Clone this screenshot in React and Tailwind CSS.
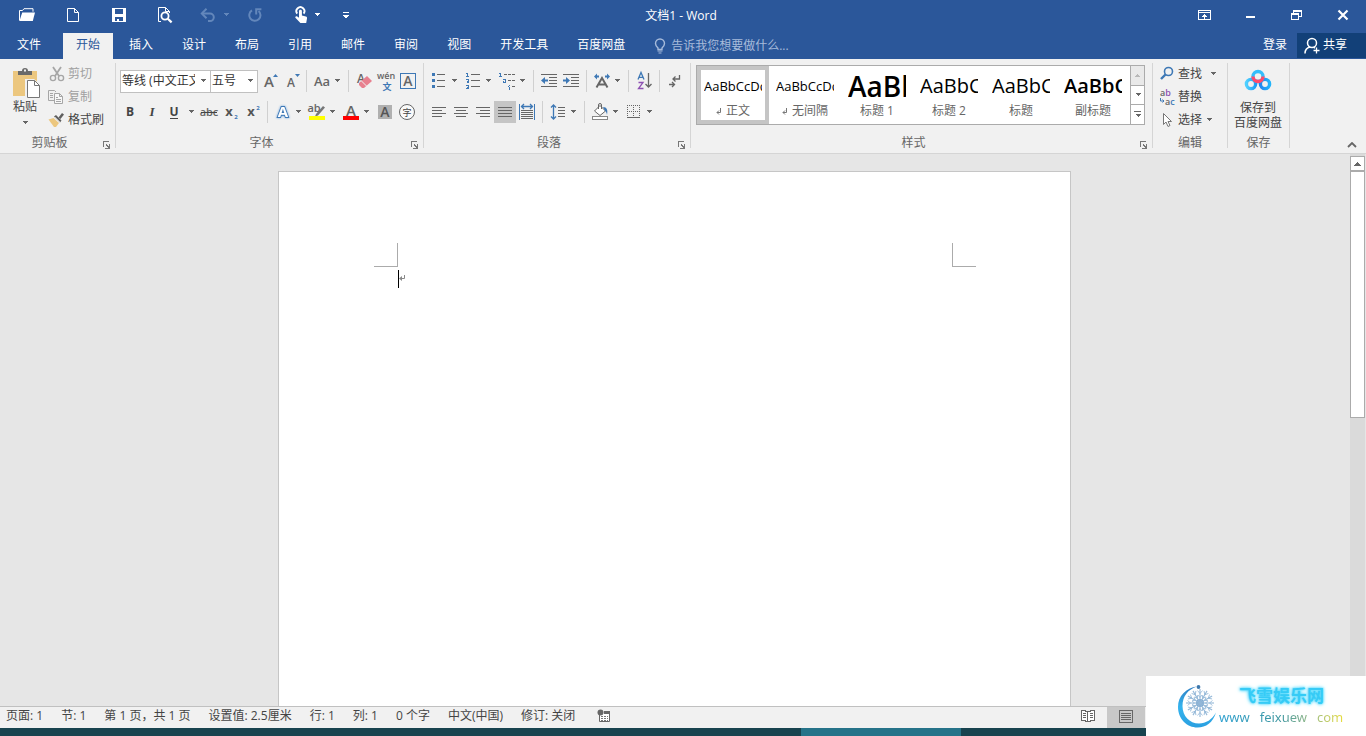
import React from "react";

const BLUE = "#3e78b5";
const GRAY = "#666666";

function Ic({ w = 22, h = 22, crisp = false, children }) {
  return (
    <svg
      width={w}
      height={h}
      viewBox={`0 0 ${w} ${h}`}
      fill="none"
      shapeRendering={crisp ? "crispEdges" : "auto"}
      className="block shrink-0"
      aria-hidden="true"
    >
      {children}
    </svg>
  );
}

function Caret({ className = "text-[#666666]" }) {
  return (
    <svg width="8" height="4" viewBox="0 0 8 4" shapeRendering="crispEdges" className={`block shrink-0 ${className}`} aria-hidden="true">
      <path d="M2 0h5v1H2zM3 1h3v1H3zM4 2h1v1H4z" fill="currentColor" />
    </svg>
  );
}

function Tool({ label, active = false, children }) {
  return (
    <button
      type="button"
      aria-label={label}
      title={label}
      className={`flex h-[22px] w-[22px] shrink-0 items-center justify-center ${active ? "bg-[#c5c5c5]" : "hover:bg-[#dcdcdc]"}`}
    >
      {children}
    </button>
  );
}

function Drop({ label, className = "" }) {
  return (
    <button type="button" aria-label={label} className={`flex h-[22px] w-2 shrink-0 items-center justify-center hover:bg-[#dcdcdc] ${className}`}>
      <Caret />
    </button>
  );
}

function Sep({ wide = false }) {
  return <div className={`h-[22px] w-px shrink-0 bg-[#d0d0d0] ${wide ? "ml-[7px] mr-1" : "mx-1"}`} />;
}

function Launcher({ label }) {
  return (
    <button type="button" aria-label={label} className="absolute -bottom-px right-1 flex h-2 w-2 items-center justify-center">
      <Ic w={8} h={8} crisp>
        <path d="M0.5 6V0.5H6" stroke="#777" />
        <path d="M3 3h1v1h1v1h1V3h1v5H2V7h3V6H4V5H3z" fill="#777" />
      </Ic>
    </button>
  );
}

function Group({ title, launcher, className = "", children }) {
  return (
    <section aria-label={title} className={`flex shrink-0 flex-col border-r border-[#d5d5d5] ${className}`}>
      <div className="flex-1">{children}</div>
      <div className={`relative flex h-2.5 items-center justify-center text-[#666666] ${launcher ? "pr-4" : ""}`}>
        <span className="leading-4">{title}</span>
        {launcher && <Launcher label={launcher} />}
      </div>
    </section>
  );
}

/* ---------- title bar ---------- */

function TitleButton({ label, className, children }) {
  return (
    <button type="button" aria-label={label} className={`flex h-[30px] shrink-0 items-center justify-center hover:bg-[#3e6db5] ${className}`}>
      {children}
    </button>
  );
}

function TitleBar() {
  return (
    <div className="grid h-[33px] grid-cols-[1fr_auto_1fr] items-start">
      <div className="flex pl-1">
        <TitleButton label="打开" className="w-[46px]">
          <Ic w={18} h={16}>
            <path d="M1.5 13.5v-10h3l1.5-1.800h9v3" stroke="#fff" />
            <path d="M4.200 5.500H17l-2.200 8.500H1.500z" fill="#fff" />
          </Ic>
        </TitleButton>
        <TitleButton label="新建" className="w-[46px]">
          <Ic w={14} h={16}>
            <path d="M1.500 1.500h7l4 4v9h-11zM8.500 1.500v4h4" stroke="#fff" />
          </Ic>
        </TitleButton>
        <TitleButton label="保存" className="w-[46px]">
          <Ic w={14} h={14} crisp>
            <path fillRule="evenodd" d="M0 0h14v14H0zM3 1v5h8V1zM3 9v4h2v-2h2v2h4V9z" fill="#fff" />
          </Ic>
        </TitleButton>
        <TitleButton label="打印预览" className="w-[46px]">
          <Ic w={16} h={18}>
            <path d="M4 15.500H1.500v-14h7l4 4V7M8.500 1.500v4h4" stroke="#fff" />
            <circle cx="8" cy="10" r="3.600" stroke="#fff" strokeWidth="1.800" />
            <path d="M10.800 12.800l3.800 3.600" stroke="#fff" strokeWidth="2.200" />
          </Ic>
        </TitleButton>
        <TitleButton label="撤消" className="ml-1 w-[46px] gap-1.5">
          <Ic w={16} h={16}>
            <path d="M2 6.500h8a3.800 3.800 0 0 1 0 7.600H8" stroke="#6387bb" strokeWidth="2" />
            <path d="M6.500 1.800L1.800 6.500l4.700 4.700" stroke="#6387bb" strokeWidth="2" />
          </Ic>
          <Caret className="text-[#6387bb]" />
        </TitleButton>
        <TitleButton label="重复" className="w-[34px]">
          <Ic w={16} h={16}>
            <path d="M5 3.400A5.600 5.600 0 1 0 11.600 4" stroke="#6387bb" strokeWidth="2" />
            <path d="M9.200 7.400V2.200h5.200" stroke="#6387bb" strokeWidth="2" />
          </Ic>
        </TitleButton>
        <TitleButton label="触摸/鼠标模式" className="ml-3 w-[46px] gap-1">
          <Ic w={16} h={18}>
            <path d="M4.200 7.600a4 4 0 1 1 6.400 0" stroke="#fff" strokeWidth="1.900" />
            <path d="M6 5.200c0-1.800 2.900-1.800 2.900 0v4.200l4 1c1 .3 1.300 1 1.100 2l-.8 4.600H7.400L2.400 11.800c-.6-1.200.8-2.200 1.900-1.300l1.700 1.300z" fill="#fff" />
          </Ic>
          <Caret className="text-white" />
        </TitleButton>
        <TitleButton label="自定义快速访问工具栏" className="w-8">
          <Ic w={8} h={8} crisp>
            <path d="M1 1h6v1H1zM1 4h6v1H1zM2 5h4v1H2zM3 6h2v1H3z" fill="#fff" />
          </Ic>
        </TitleButton>
      </div>
      <h1 className="flex h-8 items-center pr-1 text-[12px] font-normal">文档1 - Word</h1>
      <div className="flex justify-end">
        <TitleButton label="功能区显示选项" className="w-[46px]">
          <Ic w={14} h={12} crisp>
            <path d="M0.500 1.500h12v9H0.500zM0 3.500h13" stroke="#fff" />
            <path d="M6 5h1v1h1v1h1v1H7v2H6V8H4V7h1V6h1z" fill="#fff" />
          </Ic>
        </TitleButton>
        <TitleButton label="最小化" className="w-[46px]">
          <Ic w={10} h={10} crisp>
            <path d="M0 6h9v2H0z" fill="#fff" />
          </Ic>
        </TitleButton>
        <TitleButton label="向下还原" className="w-[46px]">
          <Ic w={12} h={12} crisp>
            <path fillRule="evenodd" d="M2 1h9v7H8v3H0V4h2zM3 3v1h5v3h2V3zM1 6v4h6V6z" fill="#fff" />
          </Ic>
        </TitleButton>
        <TitleButton label="关闭" className="w-[46px]">
          <Ic w={12} h={12}>
            <path d="M1.500 1.500l9 9M10.500 1.500l-9 9" stroke="#fff" strokeWidth="2.200" />
          </Ic>
        </TitleButton>
      </div>
    </div>
  );
}

const TABS = ["开始", "插入", "设计", "布局", "引用", "邮件", "审阅", "视图", "开发工具", "百度网盘"];

function TabBar() {
  return (
    <div className="flex h-[26px] items-stretch">
      <nav className="flex gap-[3px] pl-1" aria-label="功能区选项卡">
        <button type="button" className="mr-1.5 px-[13px] pb-0.5">文件</button>
        {TABS.map((tab, i) => (
          <button
            key={tab}
            type="button"
            className={`whitespace-nowrap px-[13px] pb-0.5 ${i === 0 ? "bg-[#f1f1f1] text-[#2b579a]" : "hover:bg-[#3e6db5]"}`}
          >
            {tab}
          </button>
        ))}
      </nav>
      <label className="ml-4 flex min-w-0 flex-1 items-center gap-[5px]">
        <Ic w={12} h={16}>
          <path d="M4 11.500V10C2.500 8.600 1.500 7.600 1.500 5.500a4.500 4.500 0 0 1 9 0C10.500 7.600 9.500 8.600 8 10v1.500z" stroke="#a7bbdb" strokeWidth="1.400" />
          <path d="M3.500 12.500h5v1h-5zM4.500 14.500h3v1h-3z" fill="#a7bbdb" />
        </Ic>
        <span className="sr-only">操作说明搜索</span>
        <input type="text" placeholder="告诉我您想要做什么..." className="w-full min-w-0 bg-transparent outline-none placeholder:text-[#a7bbdb]" />
      </label>
      <div className="flex items-stretch gap-2.5">
        <button type="button" className="pb-0.5">登录</button>
        <button type="button" className="mb-px flex w-[69px] items-center gap-0.5 bg-[#124078] pl-1.5">
          <Ic w={18} h={18}>
            <circle cx="9" cy="6" r="4.500" stroke="#fff" strokeWidth="1.500" />
            <path d="M2 16.500c0-3.500 2-6 5-6.600M10.500 10.200l1.500 1" stroke="#fff" strokeWidth="1.500" />
            <path d="M13.500 10.500v6M10.500 13.500h6" stroke="#fff" strokeWidth="1.300" />
          </Ic>
          <span className="pb-0.5">共享</span>
        </button>
      </div>
    </div>
  );
}

/* ---------- ribbon groups ---------- */

function ClipboardGroup() {
  return (
    <Group title="剪贴板" launcher="剪贴板设置" className="w-[116px]">
      <div className="flex pl-[7px]">
        <button type="button" className="flex w-9 flex-col items-center pt-1 text-[#444444]">
          <Ic w={32} h={32}>
            <path d="M4 4h24v25H4z" fill="#ecc77f" />
            <path d="M9 8V4h4a3 3 0 0 1 6 0h4v4z" fill="#6a6a6a" />
            <rect x="15" y="2.500" width="2" height="2" fill="#f1f1f1" />
            <path d="M16 12h9l7 6v13H16z" fill="#f1f1f1" />
            <path d="M18.500 13.500h7l5 5v12h-12z" fill="#fff" stroke="#777" />
            <path d="M25.500 13.500v5h5" stroke="#777" />
          </Ic>
          <span className="leading-4">粘贴</span>
          <span className="mt-1.5"><Caret /></span>
        </button>
        <div className="flex flex-col">
          <button type="button" disabled className="flex h-[23px] items-center gap-0.5 pb-0.5 pl-[5px] text-[#a0a0a0]">
            <Ic w={18} h={16}>
              <path d="M5 1l6 9M13 1l-6 9" stroke="#a6a6a6" strokeWidth="1.800" />
              <circle cx="5" cy="12" r="2.600" stroke="#a6a6a6" strokeWidth="1.400" />
              <circle cx="13" cy="12" r="2.600" stroke="#a6a6a6" strokeWidth="1.400" />
            </Ic>
            剪切
          </button>
          <button type="button" disabled className="flex h-[23px] items-center gap-0.5 pb-0.5 pl-[5px] text-[#a0a0a0]">
            <Ic w={18} h={16}>
              <path d="M6 11.500H0.500v-10h6L8 3" stroke="#a6a6a6" />
              <path d="M2 4.500h3M2 6.500h3M2 8.500h3" stroke="#a6a6a6" />
              <path d="M6.500 4.500h5l3 3v7h-8zM11.500 4.500v3h3" fill="#f8f8f8" stroke="#a6a6a6" />
              <path d="M8 8.500h2M8 10.500h5M8 12.500h5" stroke="#a6a6a6" />
            </Ic>
            复制
          </button>
          <button type="button" className="flex h-[23px] items-center gap-0.5 pb-0.5 pl-[5px] text-[#444444]">
            <Ic w={18} h={16}>
              <path d="M0.500 7.500l5-1.500 5.500 5-3 4H6z" fill="#ecc77f" />
              <path d="M6 4.500l2-1.500 5.500 5.500-1.500 2z" fill="#5f5f5f" />
              <path d="M10.500 5.500L14 1l2 1.500-3.500 4.500z" fill="#5f5f5f" />
              <path d="M7 5l5 5" stroke="#f1f1f1" strokeWidth="0.600" />
            </Ic>
            格式刷
          </button>
        </div>
      </div>
    </Group>
  );
}

function Combo({ label, value, className }) {
  return (
    <label className={`relative block h-[23px] shrink-0 border border-[#c0c0c0] bg-white ${className}`}>
      <span className="sr-only">{label}</span>
      <select defaultValue={value} className="block h-full w-full appearance-none overflow-hidden bg-transparent pl-px pr-[15px] text-[12px] text-[#333333] outline-none">
        <option>{value}</option>
      </select>
      <span className="pointer-events-none absolute inset-y-0 right-[3px] flex items-center">
        <Caret />
      </span>
    </label>
  );
}

function Letter({ x, y, size, color = GRAY, weight = 600, anchor = "middle", extra, children }) {
  return (
    <text x={x} y={y} fontSize={size} fill={color} fontWeight={weight} textAnchor={anchor} fontFamily="'Open Sans', 'Noto Sans CJK SC', sans-serif" {...extra}>
      {children}
    </text>
  );
}

function FontGroup() {
  return (
    <Group title="字体" launcher="字体设置" className="w-[308px]">
      <div className="flex flex-col gap-[9px] pl-[3px] pt-[7px]">
        <div className="flex h-[22px] items-center">
          <Combo label="字体" value="等线 (中文正文)" className="ml-px w-[91px]" />
          <Combo label="字号" value="五号" className="-ml-px w-[48px]" />
          <Tool label="增大字号">
            <Ic><Letter x={11} y={17} size={15}>A</Letter><path d="M15 7h5l-2.500-3z" fill={BLUE} /></Ic>
          </Tool>
          <Tool label="减小字号">
            <Ic><Letter x={11} y={17} size={12}>A</Letter><path d="M15 4h5l-2.500 3z" fill={BLUE} /></Ic>
          </Tool>
          <Sep />
          <Tool label="更改大小写">
            <Ic><Letter x={11} y={16} size={13}>Aa</Letter></Ic>
          </Tool>
          <Drop label="更改大小写选项" />
          <Sep wide />
          <Tool label="清除所有格式">
            <Ic>
              <Letter x={8} y={13} size={12}>A</Letter>
              <path d="M6 13l8-7 5 5-8 7H9l-3-3z" fill="#e8808f" />
              <path d="M8.500 11l5 5" stroke="#f1f1f1" />
            </Ic>
          </Tool>
          <Tool label="拼音指南">
            <Ic>
              <Letter x={11} y={9} size={9}>wén</Letter>
              <Letter x={12} y={20} size={9} color={BLUE} weight={700}>文</Letter>
            </Ic>
          </Tool>
          <Tool label="字符边框">
            <Ic>
              <rect x="3.500" y="3.500" width="15" height="15" stroke={BLUE} />
              <Letter x={11} y={16} size={14}>A</Letter>
            </Ic>
          </Tool>
        </div>
        <div className="flex h-[22px] items-center">
          <Tool label="加粗">
            <Ic><Letter x={11} y={15} size={12} color="#444" weight={700}>B</Letter></Ic>
          </Tool>
          <Tool label="倾斜">
            <Ic><text x="11" y="15" fontSize="13" fill="#444" textAnchor="middle" fontStyle="italic" fontWeight="700" fontFamily="'Liberation Serif', serif">I</text></Ic>
          </Tool>
          <Tool label="下划线">
            <Ic><Letter x={11} y={15} size={12} color="#444" weight={700}>U</Letter><path d="M7 17.500h8" stroke="#444" /></Ic>
          </Tool>
          <Drop label="下划线选项" className="mx-0.5" />
          <Tool label="删除线">
            <Ic><Letter x={12} y={15} size={11}>abc</Letter><path d="M4 11.500h16" stroke="#444" /></Ic>
          </Tool>
          <Tool label="下标">
            <Ic><Letter x={10} y={15} size={13} color="#555" weight={700}>x</Letter><Letter x={17} y={18} size={6} color={BLUE} weight={700}>2</Letter></Ic>
          </Tool>
          <Tool label="上标">
            <Ic><Letter x={10} y={15} size={13} color="#555" weight={700}>x</Letter><Letter x={17} y={9} size={6} color={BLUE} weight={700}>2</Letter></Ic>
          </Tool>
          <Sep />
          <Tool label="文本效果和版式">
            <Ic>
              <Letter x={11} y={16} size={15} color="#fff" weight={700} extra={{ stroke: BLUE, strokeWidth: 1.8, paintOrder: "stroke", style: { filter: "drop-shadow(0 0 1px #6ba3dd)" } }}>A</Letter>
            </Ic>
          </Tool>
          <Drop label="文本效果选项" />
          <div className="w-1" />
          <Tool label="突出显示">
            <Ic>
              <Letter x={8} y={11} size={11}>ab</Letter>
              <path d="M10 13L17 5l2 1.500-7 8-3 1z" fill="#777" />
              <path d="M3 15h16v4H3z" fill="#ffff00" />
            </Ic>
          </Tool>
          <Drop label="突出显示颜色" />
          <div className="w-1" />
          <Tool label="字体颜色">
            <Ic><Letter x={11} y={15} size={15}>A</Letter><path d="M3 15h16v4H3z" fill="#ff0000" /></Ic>
          </Tool>
          <Drop label="更多字体颜色" />
          <div className="w-1" />
          <Tool label="字符底纹">
            <Ic><path d="M4 4h14v14H4z" fill="#b0b0b0" /><Letter x={11} y={16} size={14} color="#555">A</Letter></Ic>
          </Tool>
          <Tool label="带圈字符">
            <Ic><circle cx="11" cy="11" r="7.500" fill="#fafafa" stroke="#666" /><Letter x={11} y={14.500} size={9} weight={400} color="#444">字</Letter></Ic>
          </Tool>
        </div>
      </div>
    </Group>
  );
}

const ALIGNMENTS = [
  ["左对齐", "M4 6.500h14M4 9.500h10M4 12.500h14M4 15.500h10"],
  ["居中", "M4 6.500h14M6 9.500h10M4 12.500h14M6 15.500h10"],
  ["右对齐", "M4 6.500h14M8 9.500h10M4 12.500h14M8 15.500h10"],
  ["两端对齐", "M4 6.500h14M4 9.500h14M4 12.500h14M4 15.500h14"],
];

function ParagraphGroup() {
  return (
    <Group title="段落" launcher="段落设置" className="w-[267px]">
      <div className="flex flex-col gap-[9px] pl-1 pt-[7px]">
        <div className="flex h-[22px] items-center">
          <Tool label="项目符号">
            <Ic crisp>
              <path d="M4 3h3v3H4zM4 9h3v3H4zM4 15h3v3H4z" fill={BLUE} />
              <path d="M9 4.500h8M9 10.500h8M9 16.500h8" stroke={GRAY} />
            </Ic>
          </Tool>
          <Drop label="项目符号库" />
          <div className="w-1" />
          <Tool label="编号">
            <Ic crisp>
              <path d="M4 3.500h1.500V7M4 6.500h3M4 9.500h2.500v1.500H5v1.500h2M4 15.500h2.500v3H4M5 17.500h1" stroke={BLUE} />
              <path d="M9 4.500h9M9 10.500h9M9 16.500h9" stroke={GRAY} />
            </Ic>
          </Tool>
          <Drop label="编号库" />
          <div className="w-1" />
          <Tool label="多级列表">
            <Ic crisp>
              <path d="M3 3.500h1.500V7M3 6.500h3M7 9.500h2.500V13M9 12.500H7.500v-1.500M13 15h1M13.500 16.500V20M12 16.500h1" stroke={BLUE} />
              <path d="M8 4.500h11M12 10.500h7M16 16.500h3" stroke={GRAY} strokeDasharray="3 1" />
            </Ic>
          </Tool>
          <Drop label="多级列表库" />
          <Sep wide />
          <Tool label="减少缩进量">
            <Ic>
              <path d="M3 4.500h16M11 7.500h8M11 10.500h8M11 13.500h8M3 16.500h16" stroke={GRAY} />
              <path d="M3 10.500L7 7v2.500h3v2H7V14z" fill={BLUE} />
            </Ic>
          </Tool>
          <Tool label="增加缩进量">
            <Ic>
              <path d="M3 4.500h16M11 7.500h8M11 10.500h8M11 13.500h8M3 16.500h16" stroke={GRAY} />
              <path d="M10 10.500L6 7v2.500H3v2h3V14z" fill={BLUE} />
            </Ic>
          </Tool>
          <Sep />
          <Tool label="中文版式">
            <Ic>
              <path d="M5.500 17.500L11 8l5.500 9.500M7.500 14.500h7" stroke={GRAY} strokeWidth="2" />
              <path d="M3 6.500l3-3v2h2v2H6v2zM19 6.500l-3-3v2h-2v2h2v2z" fill={BLUE} />
            </Ic>
          </Tool>
          <Drop label="中文版式选项" />
          <Sep wide />
          <Tool label="排序">
            <Ic>
              <path d="M5 9.500L8 2.500l3 7M6 7.300h4" stroke={BLUE} strokeWidth="1.300" />
              <path d="M5.500 12.500H10L5.500 18.500h5" stroke="#8e52b3" strokeWidth="1.300" />
              <path d="M15.500 3v14M12.500 14l3 3 3-3" stroke={GRAY} strokeWidth="1.300" />
            </Ic>
          </Tool>
          <Sep />
          <Tool label="显示/隐藏编辑标记">
            <Ic>
              <path d="M15.500 5v4H9M11.500 6.500L9 9l2.500 2.500" stroke={GRAY} strokeWidth="1.300" />
              <path d="M5 14.500h5M8 12l2.500 2.500L8 17" stroke={GRAY} strokeWidth="1.300" />
            </Ic>
          </Tool>
        </div>
        <div className="flex h-[22px] items-center">
          {ALIGNMENTS.map(([label, d], i) => (
            <Tool key={label} label={label} active={i === 3}>
              <Ic crisp><path d={d} stroke={GRAY} /></Ic>
            </Tool>
          ))}
          <Tool label="分散对齐">
            <Ic>
              <path d="M3.500 3v16M18.500 3v16" stroke={BLUE} />
              <path d="M5 5.500h12M8 3L5.500 5.500 8 8M14 3l2.500 2.500L14 8" stroke={BLUE} strokeWidth="1.300" />
              <path d="M5 9.500h12M5 11.500h12M5 13.500h12M5 15.500h12M5 17.500h12" stroke={GRAY} />
            </Ic>
          </Tool>
          <Sep />
          <Tool label="行和段落间距">
            <Ic>
              <path d="M6.500 4v14M4 6.500L6.500 4 9 6.500M4 15.500L6.500 18 9 15.500" stroke={BLUE} strokeWidth="1.300" />
              <path d="M11 6.500h7M11 9.500h7M11 12.500h7M11 15.500h7" stroke={GRAY} />
            </Ic>
          </Tool>
          <Drop label="行距选项" />
          <Sep wide />
          <Tool label="底纹">
            <Ic>
              <path d="M5.500 10L11 4.500l5.500 5.500-5.500 4.500z" fill="#fff" stroke={GRAY} />
              <path d="M9.500 8V4a1.500 1.500 0 0 1 3 0v4" stroke={GRAY} />
              <path d="M14 6c4 0 5 3 4 8-.500-3-1.500-4-2-4z" fill={BLUE} />
              <rect x="3.500" y="15.500" width="15" height="3" fill="#fff" stroke="#888" />
            </Ic>
          </Tool>
          <Drop label="底纹颜色" />
          <div className="w-1" />
          <Tool label="边框">
            <Ic crisp>
              <path d="M4 4.500h13M4 10.500h13" stroke={GRAY} strokeDasharray="1 1" />
              <path d="M4.500 4v12M10.500 4v12M16.500 4v12" stroke={GRAY} strokeDasharray="1 1" />
              <path d="M4 16.500h13" stroke={GRAY} />
            </Ic>
          </Tool>
          <Drop label="边框选项" />
        </div>
      </div>
    </Group>
  );
}

const STYLES = [
  { name: "正文", sample: "AaBbCcDd", mark: true, look: "text-[13px] font-normal" },
  { name: "无间隔", sample: "AaBbCcDd", mark: true, look: "text-[13px] font-normal" },
  { name: "标题 1", sample: "AaBb", look: "text-[28px] font-semibold" },
  { name: "标题 2", sample: "AaBbC", look: "text-[20px] font-normal" },
  { name: "标题", sample: "AaBbC", look: "text-[20px] font-normal" },
  { name: "副标题", sample: "AaBbC", look: "text-[20px] font-semibold" },
];

function StylesGroup() {
  return (
    <Group title="样式" launcher="样式设置" className="w-[462px]">
      <div className="flex pl-[5px] pr-[7px] pt-0.5">
        <div className="flex h-[60px] flex-1 border border-[#ababab] bg-white">
          {STYLES.map((s, i) => (
            <button
              key={s.name}
              type="button"
              className={`flex w-[72px] shrink-0 flex-col items-center border-4 ${i === 0 ? "border-[#c5c5c5]" : "border-transparent"}`}
            >
              <span className={`flex h-8 w-[58px] items-center overflow-hidden whitespace-nowrap leading-none text-black ${s.look}`}>{s.sample}</span>
              <span className="flex items-center gap-1 leading-[18px] text-[#666666]">
                {s.mark && (
                  <Ic w={6} h={8}>
                    <path d="M4.500 1v4.500H1M3 3.500l-2 2 2 2" stroke="#777" />
                  </Ic>
                )}
                {s.name}
              </span>
            </button>
          ))}
          <div className="ml-auto flex w-3.5 flex-col divide-y divide-[#ababab] border-l border-[#ababab]">
            <button type="button" aria-label="上一行" className="flex flex-1 items-center justify-center bg-[#e9e9e9]">
              <span className="rotate-180"><Caret className="text-[#b8b8b8]" /></span>
            </button>
            <button type="button" aria-label="下一行" className="flex flex-1 items-center justify-center"><Caret /></button>
            <button type="button" aria-label="其他" className="flex flex-1 flex-col items-center justify-center gap-0.5">
              <span className="h-px w-[7px] bg-[#666666]" />
              <Caret />
            </button>
          </div>
        </div>
      </div>
    </Group>
  );
}

function EditGroup() {
  return (
    <Group title="编辑" className="w-[75px]">
      <div className="flex flex-col items-start pl-1.5 text-[#444444]">
        <button type="button" className="flex h-[23px] items-center gap-[3px] pb-0.5">
          <Ic w={16} h={16}>
            <circle cx="9.500" cy="5.500" r="4" stroke={BLUE} strokeWidth="1.600" />
            <path d="M6.500 8.500L2 13" stroke={BLUE} strokeWidth="2.400" />
          </Ic>
          <span>查找</span>
          <span className="ml-1"><Caret /></span>
        </button>
        <button type="button" className="flex h-[23px] items-center gap-[3px] pb-0.5">
          <Ic w={16} h={18}>
            <text x="1" y="8" fontSize="9" fontWeight="600" fontFamily="'Open Sans', sans-serif" fill={GRAY}>
              a<tspan fill="#8e52b3">b</tspan>
            </text>
            <text x="6" y="17" fontSize="9" fontWeight="600" fontFamily="'Open Sans', sans-serif" fill={GRAY}>
              a<tspan fill={BLUE}>c</tspan>
            </text>
            <path d="M1.500 10v3H5M3.500 11.500L5 13l-1.500 1.500" stroke={BLUE} />
          </Ic>
          <span>替换</span>
        </button>
        <button type="button" className="flex h-[23px] items-center gap-[3px] pb-0.5">
          <Ic w={16} h={16}>
            <path d="M4.500 1.500v11l2.500-2.500 2 4.500 2-1-2-4h3.500z" fill="#fff" stroke="#777" />
          </Ic>
          <span>选择</span>
          <Caret />
        </button>
      </div>
    </Group>
  );
}

function SaveGroup() {
  return (
    <Group title="保存" className="w-[62px]">
      <button type="button" className="flex w-full flex-col items-center pr-px pt-[5px] text-[#444444]">
        <Ic w={28} h={24}>
          <defs>
            <linearGradient id="ringLeft" x1="0" x2="1"><stop offset="0" stopColor="#4fd0ff" /><stop offset="1" stopColor="#1f9cf5" /></linearGradient>
            <linearGradient id="ringRight" x1="0" x2="1"><stop offset="0" stopColor="#1f86f0" /><stop offset="1" stopColor="#22b4fa" /></linearGradient>
          </defs>
          <circle cx="7" cy="16" r="4.600" stroke="url(#ringLeft)" strokeWidth="3.400" />
          <circle cx="21" cy="16" r="4.600" stroke="url(#ringRight)" strokeWidth="3.400" />
          <circle cx="14" cy="8.500" r="5" stroke="#35bdfb" strokeWidth="3.400" />
          <path d="M9 8.500a5 5 0 0 0 10 0" stroke="#ff4a6c" strokeWidth="3.400" />
        </Ic>
        <span className="mt-2 flex flex-col items-center whitespace-nowrap leading-[15px]">
          <span>保存到</span>
          <span>百度网盘</span>
        </span>
      </button>
    </Group>
  );
}

function Ribbon() {
  return (
    <div className="flex h-[95px] shrink-0 border-b border-[#d5d5d5] bg-[#f1f1f1] pb-[5px] pt-1">
      <ClipboardGroup />
      <FontGroup />
      <ParagraphGroup />
      <StylesGroup />
      <EditGroup />
      <SaveGroup />
      <div className="flex flex-1 items-end justify-end pr-[9px]">
        <button type="button" aria-label="折叠功能区">
          <Ic w={10} h={6}><path d="M1 5l4-4 4 4" stroke="#666" strokeWidth="1.800" /></Ic>
        </button>
      </div>
    </div>
  );
}

/* ---------- document ---------- */

function DocumentArea() {
  return (
    <main className="flex min-h-0 flex-1 bg-[#e6e6e6]">
      <div className="flex min-w-0 flex-1 justify-center overflow-hidden pr-0.5 pt-[17px]">
        <article className="h-[1122px] w-[793px] shrink-0 border border-[#c6c6c6] bg-white pt-[71px]">
          <div className="flex justify-between pl-[95px] pr-[94px]">
            <div className="h-6 w-6 border-b border-r border-[#ababab]" />
            <div className="h-6 w-6 border-b border-l border-[#ababab]" />
          </div>
          <div className="flex px-[119px] pt-[3px]">
            <span className="h-[18px] w-px bg-black" />
            <span className="pt-1">
              <Ic w={8} h={10}><path d="M5.500 1v3.500H1" stroke="#888" /><path d="M0 4.500L3 2v5z" fill="#888" /></Ic>
            </span>
          </div>
        </article>
      </div>
      <div className="mr-px flex w-[15px] shrink-0 flex-col bg-[#dadada] pt-0.5">
        <button type="button" aria-label="向上滚动" className="flex h-[15px] items-center justify-center border border-[#ababab] bg-white">
          <svg width="7" height="4" viewBox="0 0 7 4" shapeRendering="crispEdges" aria-hidden="true">
            <path d="M3 0h1v1H3zM2 1h3v1H2zM1 2h5v1H1zM0 3h7v1H0z" fill="#666" />
          </svg>
        </button>
        <div className="h-[247px] border border-[#ababab] bg-white" />
      </div>
    </main>
  );
}

function StatusBar() {
  return (
    <footer className="flex h-[22px] shrink-0 items-stretch justify-between border-t border-[#c0c0c0] bg-[#f1f1f1] text-[#444444]">
      <div className="flex items-center gap-[18px] whitespace-nowrap pb-[3px] pl-1.5">
        <span>页面: 1</span>
        <span>节: 1</span>
        <span>第 1 页，共 1 页</span>
        <span>设置值: 2.5厘米</span>
        <span>行: 1</span>
        <span>列: 1</span>
        <span>0 个字</span>
        <span>中文(中国)</span>
        <span>修订: 关闭</span>
        <button type="button" aria-label="录制宏" className="pl-1">
          <Ic w={14} h={14}>
            <path d="M2.500 6v6.500h10v-10H8" fill="#fff" stroke="#666" />
            <path d="M7 2h6v3H7z" fill="#666" />
            <circle cx="3.500" cy="3.500" r="3" fill="#666" />
            <path d="M4 7.500h7M4 9.500h7M4 11.500h7" stroke="#777" strokeDasharray="2 1" />
          </Ic>
        </button>
      </div>
      <div className="mr-[221px] flex">
        <button type="button" aria-label="阅读视图" className="flex w-[38px] items-center justify-center pb-0.5">
          <Ic w={14} h={13} crisp>
            <path d="M1 1h5v1h1v9H5v-1H0V1zM8 1h5v9H9v1H7V2h1z" fill="#fff" />
            <path d="M0.500 0.500h4v1h2v10h-2v-1h-4zM13.500 0.500h-4v1h-3v10h3v-1h4z" stroke="#666" />
            <path d="M2 3.500h3M2 5.500h3M2 7.500h3M9 3.500h3M9 5.500h3M9 7.500h3" stroke="#666" />
          </Ic>
        </button>
        <button type="button" aria-label="页面视图" className="flex w-[38px] items-center justify-center bg-[#c8c8c8] pb-0.5">
          <Ic w={14} h={13} crisp>
            <path d="M0.500 0.500h13v12H0.500zM2 3.500h10M2 5.500h10M2 7.500h10M2 9.500h10" stroke="#666" />
          </Ic>
        </button>
      </div>
    </footer>
  );
}

const FLAKE_ARMS = [0, 30, 60, 90, 120, 150, 180, 210, 240, 270, 300, 330];

function SiteBadge() {
  return (
    <a href="#" className="absolute bottom-0 right-0 flex h-[60px] w-[220px] items-center bg-white pl-[31px]">
      <Ic w={42} h={46}>
        <defs>
          <linearGradient id="moon" x1="0" y1="0" x2="0" y2="1"><stop offset="0" stopColor="#2f7fc4" /><stop offset="0.500" stopColor="#35b4ee" /><stop offset="1" stopColor="#2a9fe0" /></linearGradient>
        </defs>
        <path d="M20 3.500C9 5 1 13 1 24c0 12 9 20.500 19.500 20.500 8.500 0 15.500-5 18.500-15-4 7-10 11-17 11C12.500 40.500 5.500 33 5.500 23 5.500 13 11 6.500 20 3.500z" fill="url(#moon)" />
        <circle cx="23" cy="20" r="4" fill="#7fa9cf" />
        <circle cx="21.500" cy="4" r="1.900" fill="#3d78ad" />
        {FLAKE_ARMS.map((a) => (
          <g key={a} transform={`rotate(${a} 23 20)`} stroke="#94b8d8">
            <path d="M23 20V6" strokeWidth="1.100" />
            <path d="M20.500 7.500l2.500 3 2.500-3M21 12l2 2.500 2-2.500" strokeWidth="0.800" />
          </g>
        ))}
      </Ic>
      <span className="flex flex-col">
        <span className="pl-5 text-[17px] font-bold leading-[22px] text-[#35cbf6] [-webkit-text-stroke:2px_#effdff] [paint-order:stroke_fill] [text-shadow:0_0_3px_#3fd3fb,0_0_4px_#7fe6ff]">飞雪娱乐网</span>
        <span className="flex gap-2.5 bg-gradient-to-r from-[#2a9fd0] via-[#3f97a0] to-[#e8dc3a] bg-clip-text font-['Noto_Sans'] text-[13px] leading-5 text-transparent">
          <span>www</span>
          <span>feixuew</span>
          <span>com</span>
        </span>
      </span>
    </a>
  );
}

export default function App() {
  return (
    <div className="relative flex h-screen flex-col overflow-hidden font-['Open_Sans','Noto_Sans_CJK_SC',sans-serif] text-[12px]">
      <header className="shrink-0 bg-[#2b579a] text-white">
        <TitleBar />
        <TabBar />
      </header>
      <Ribbon />
      <DocumentArea />
      <StatusBar />
      <div className="flex h-2 shrink-0 bg-[#18434f]">
        <div className="ml-[801px] w-40 bg-[#267389]" />
      </div>
      <SiteBadge />
    </div>
  );
}
